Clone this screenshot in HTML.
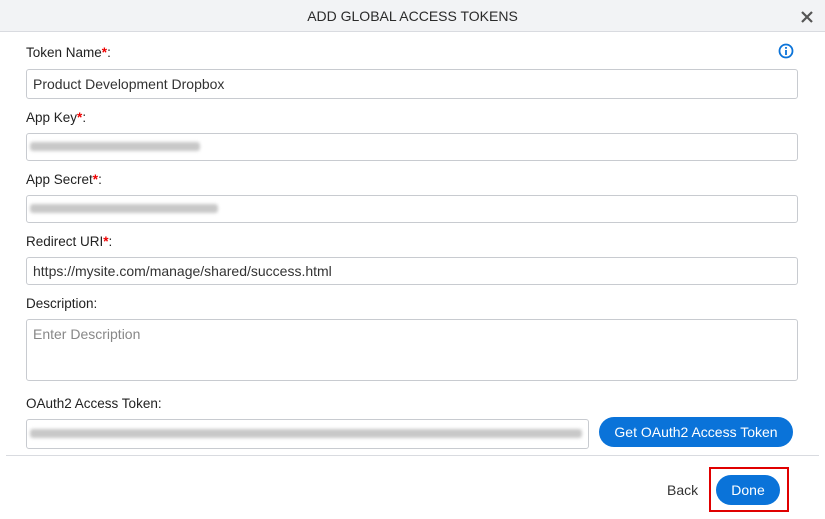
<!DOCTYPE html>
<html><head><style>
body{margin:0;width:825px;height:519px;background:#fff;font-family:"Liberation Sans",sans-serif;position:relative;overflow:hidden;color:#333}
.hdr{position:absolute;left:0;top:0;width:825px;height:31px;background:#f2f3f5;border-bottom:1px solid #d9dbe0}
.title{position:absolute;left:0;width:825px;top:8px;text-align:center;font-size:14px;color:#2a2a2a;letter-spacing:0}
.lbl{position:absolute;left:26px;font-size:13.5px;color:#222}
.req{color:#e00;font-weight:bold}
.inp{position:absolute;left:26px;width:772px;border:1px solid #c8cbd0;border-radius:3px;box-sizing:border-box;background:#fff;font-size:14px;color:#333;padding-left:6px}
.blur{position:absolute;height:9px;background:#c8c8c8;filter:blur(1.5px);border-radius:3px}
.btn{position:absolute;background:#0a73d9;color:#fff;border-radius:15px;font-size:14px;text-align:center}
</style></head><body>
<div class="hdr"><div class="title">ADD GLOBAL ACCESS TOKENS</div>
<svg style="position:absolute;left:801px;top:11px" width="12" height="12"><path d="M1 1L11 11M11 1L1 11" stroke="#555" stroke-width="2.2"/></svg></div>
<svg style="position:absolute;left:778px;top:43px" width="16" height="16"><circle cx="8" cy="8" r="6.5" fill="none" stroke="#0a73d9" stroke-width="1.8"/><rect x="7.1" y="7" width="1.8" height="5" fill="#0a73d9"/><rect x="7.1" y="4" width="1.8" height="1.8" fill="#0a73d9"/></svg>
<div class="lbl" style="top:45px">Token Name<span class="req">*</span>:</div>
<div class="inp" style="top:69px;height:30px;line-height:28px">Product Development Dropbox</div>
<div class="lbl" style="top:110px">App Key<span class="req">*</span>:</div>
<div class="inp" style="top:133px;height:28px"></div><div class="blur" style="left:30px;top:142px;width:170px"></div>
<div class="lbl" style="top:172px">App Secret<span class="req">*</span>:</div>
<div class="inp" style="top:195px;height:28px"></div><div class="blur" style="left:30px;top:204px;width:188px"></div>
<div class="lbl" style="top:234px">Redirect URI<span class="req">*</span>:</div>
<div class="inp" style="top:257px;height:28px;line-height:26px">https://mysite.com/manage/shared/success.html</div>
<div class="lbl" style="top:296px">Description:</div>
<div class="inp" style="top:319px;height:62px;line-height:28px;color:#888">Enter Description</div>
<div class="lbl" style="top:396px">OAuth2 Access Token:</div>
<div class="inp" style="top:419px;height:30px;width:563px"></div><div class="blur" style="left:30px;top:429px;width:552px"></div>
<div class="btn" style="left:599px;top:417px;width:194px;height:30px;line-height:30px">Get OAuth2 Access Token</div>
<div style="position:absolute;left:6px;top:455px;width:813px;height:1px;background:#d9dbe0"></div>
<div style="position:absolute;left:667px;top:482px;font-size:14px;color:#333">Back</div>
<div class="btn" style="left:716px;top:475px;width:64px;height:30px;line-height:30px">Done</div>
<div style="position:absolute;left:709px;top:467px;width:76px;height:41px;border:2px solid #e00000"></div>
</body></html>
